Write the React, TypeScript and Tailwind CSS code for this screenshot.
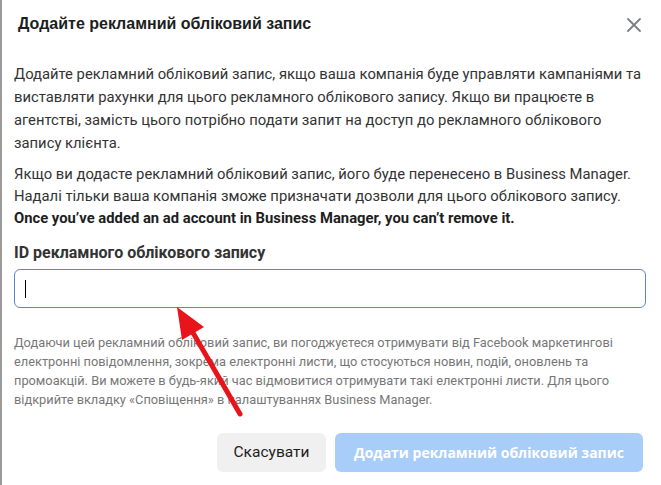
import React from 'react';

const body = { fontFamily: 'Roboto, "Liberation Sans", sans-serif' };

function CloseIcon() {
  return (
    <svg width="16" height="16" viewBox="0 0 16 16" className="text-[#7b7f85]">
      <path d="M2 2 L14 14 M14 2 L2 14" stroke="currentColor" strokeWidth="1.8" strokeLinecap="round" />
    </svg>
  );
}

function RedArrow() {
  return (
    <svg className="absolute left-0 top-0 pointer-events-none" width="661" height="485">
      <line x1="238" y1="414" x2="190" y2="331" stroke="#e8141b" strokeWidth="5" strokeLinecap="round" />
      <polygon points="175,307 202,327 180,340" fill="#e8141b" />
    </svg>
  );
}

export default function App() {
  return (
    <div className="relative w-[661px] h-[485px] bg-white overflow-hidden border-l-2 border-[#9a9a9a]" style={body}>
      <div className="flex items-center justify-between pl-4 pr-[19px] h-[47px]">
        <h1 className="text-[16px] font-bold text-[#1c1e21]" style={{ fontFamily: '"Liberation Sans", Arial, sans-serif' }}>
          Додайте рекламний обліковий запис
        </h1>
        <button className="pt-[3px]">
          <CloseIcon />
        </button>
      </div>
      <div className="px-3 pt-[16px]">
        <p className="text-[14.8px] leading-[23px] text-[#333] -mr-2">
          Додайте рекламний обліковий запис, якщо ваша компанія буде управляти кампаніями та
          <br />
          виставляти рахунки для цього рекламного облікового запису. Якщо ви працюєте в
          <br />
          агентстві, замість цього потрібно подати запит на доступ до рекламного облікового
          <br />
          запису клієнта.
        </p>
        <p className="mt-[8px] text-[14.8px] leading-[22px] text-[#333] -mr-2">
          Якщо ви додасте рекламний обліковий запис, його буде перенесено в Business Manager.
          <br />
          Надалі тільки ваша компанія зможе призначати дозволи для цього облікового запису.
          <br />
          <span className="font-bold text-[#1c1e21]">Once you’ve added an ad account in Business Manager, you can’t remove it.</span>
        </p>
        <label className="block mt-[14px] text-[16px] font-bold text-[#333] leading-[20px]">ID рекламного облікового запису</label>
        <div className="mt-[6px] mr-[3px] h-[39px] rounded-[6px] border border-[#5b86cf] flex items-center px-[10px]">
          <div className="w-px h-[18px] bg-black" />
        </div>
        <p className="mt-[25px] pr-4 text-[12.8px] leading-[19px] text-[#777]">
          Додаючи цей рекламний обліковий запис, ви погоджуєтеся отримувати від Facebook маркетингові електронні повідомлення, зокрема електронні листи, що стосуються новин, подій, оновлень та промоакцій. Ви можете в будь-який час відмовитися отримувати такі електронні листи. Для цього відкрийте вкладку «Сповіщення» в налаштуваннях Business Manager.
        </p>
        <div className="flex justify-end gap-[9px] mt-[24px] mr-[6px]">
          <button className="h-[39px] w-[109px] rounded-[6px] bg-[#f0f0f0] text-[15.5px] text-[#1c1e21]">Скасувати</button>
          <button
            className="h-[39px] w-[308px] rounded-[6px] bg-[#a9cdf9] text-[14px] font-bold text-white"
            style={{ fontFamily: '"Open Sans", sans-serif' }}
          >
            Додати рекламний обліковий запис
          </button>
        </div>
      </div>
      <RedArrow />
    </div>
  );
}
